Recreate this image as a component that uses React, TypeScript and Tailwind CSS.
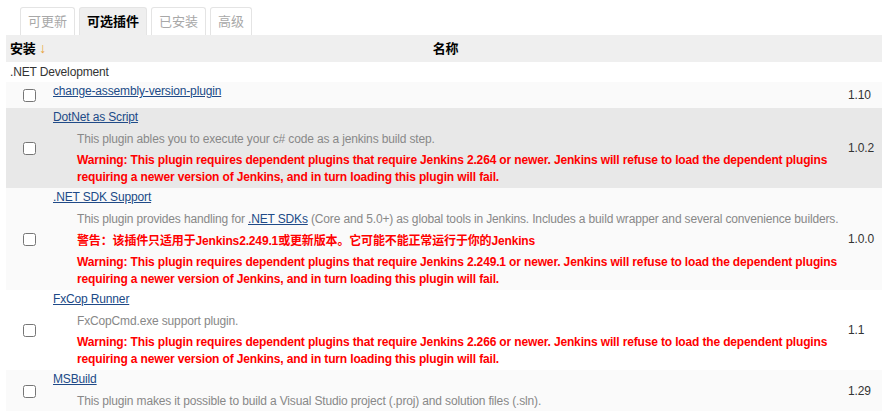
import { JSX } from 'react'

type Plugin = {
  name: string
  desc?: JSX.Element | string
  cn?: string
  warn?: string
  version: string
  bg: string
}

const warn = (v: string): string =>
  `Warning: This plugin requires dependent plugins that require Jenkins ${v} or newer. Jenkins will refuse to load the dependent plugins requiring a newer version of Jenkins, and in turn loading this plugin will fail.`

const plugins: Plugin[] = [
  { name: 'change-assembly-version-plugin', version: '1.10', bg: 'bg-[#fafafa]' },
  {
    name: 'DotNet as Script',
    desc: 'This plugin ables you to execute your c# code as a jenkins build step.',
    warn: warn('2.264'),
    version: '1.0.2',
    bg: 'bg-[#e8e8e8]'
  },
  {
    name: '.NET SDK Support',
    desc: (
      <>
        This plugin provides handling for{' '}
        <a href="#" className="text-[#204a87] underline">
          .NET SDKs
        </a>{' '}
        (Core and 5.0+) as global tools in Jenkins. Includes a build wrapper and several convenience
        builders.
      </>
    ),
    cn: '警告：该插件只适用于Jenkins2.249.1或更新版本。它可能不能正常运行于你的Jenkins',
    warn: warn('2.249.1'),
    version: '1.0.0',
    bg: 'bg-[#fafafa]'
  },
  {
    name: 'FxCop Runner',
    desc: 'FxCopCmd.exe support plugin.',
    warn: warn('2.266'),
    version: '1.1',
    bg: 'bg-white'
  },
  {
    name: 'MSBuild',
    desc: 'This plugin makes it possible to build a Visual Studio project (.proj) and solution files (.sln).',
    version: '1.29',
    bg: 'bg-[#fafafa]'
  }
]

const Tab = ({ label, active }: { label: string; active?: boolean }): JSX.Element => (
  <div
    className={
      active
        ? 'h-[28px] px-[7px] flex items-center rounded-t-[3px] border border-b-0 border-[#e4e4e4] bg-[#efefef] font-bold text-black'
        : 'h-[28px] px-[7px] flex items-center rounded-t-[3px] border border-b-0 border-[#e4e4e4] bg-white text-[#a8a8a8]'
    }
  >
    {label}
  </div>
)

export default function App(): JSX.Element {
  return (
    <div className="w-[882px] h-[412px] overflow-hidden bg-white text-[12px] tracking-[-0.15px] text-[#333] font-['Liberation_Sans','Noto_Sans_CJK_SC',sans-serif]">
      <div className="flex items-end gap-[4px] pl-[20px] pt-[7px] text-[13px] tracking-normal">
        <Tab label="可更新" />
        <Tab label="可选插件" active />
        <Tab label="已安装" />
        <Tab label="高级" />
      </div>
      <div className="pl-[6px]">
        <table className="w-full border-collapse">
          <thead>
            <tr className="bg-[#efefef] h-[27px]">
              <th className="w-[45px] pl-[4px] text-left text-[13px] font-bold text-black whitespace-nowrap">
                安装 <span className="font-normal text-[14px] text-[#e8a33d]">↓</span>
              </th>
              <th className="font-bold text-[13px] text-black text-center">名称</th>
              <th className="w-[42px]"></th>
            </tr>
          </thead>
          <tbody>
            <tr className="h-[20px] bg-white">
              <td colSpan={3} className="pl-[4px] text-[#333]">
                .NET Development
              </td>
            </tr>
            {plugins.map((p) => (
              <tr key={p.name} className={p.bg}>
                <td className="h-[26px] text-center align-middle">
                  <input type="checkbox" className="w-[13px] h-[13px] align-middle ml-[1px]" />
                </td>
                <td className="pl-[2px] pt-[1px] pb-[2px] align-top">
                  <div className="leading-[16px]">
                    <a href="#" className="text-[#204a87] underline">
                      {p.name}
                    </a>
                  </div>
                  {p.desc && (
                    <div className="ml-[24px] mt-[6px] leading-[16px] text-[#888]">{p.desc}</div>
                  )}
                  {p.cn && (
                    <div className="ml-[24px] mt-[6px] leading-[16px] font-bold text-[#ff0000]">
                      {p.cn}
                    </div>
                  )}
                  {p.warn && (
                    <div className="ml-[24px] mt-[5px] leading-[17px] font-bold text-[#ff0000]">
                      {p.warn}
                    </div>
                  )}
                </td>
                <td className="pl-[8px] align-middle text-[#333]">{p.version}</td>
              </tr>
            ))}
          </tbody>
        </table>
      </div>
    </div>
  )
}
